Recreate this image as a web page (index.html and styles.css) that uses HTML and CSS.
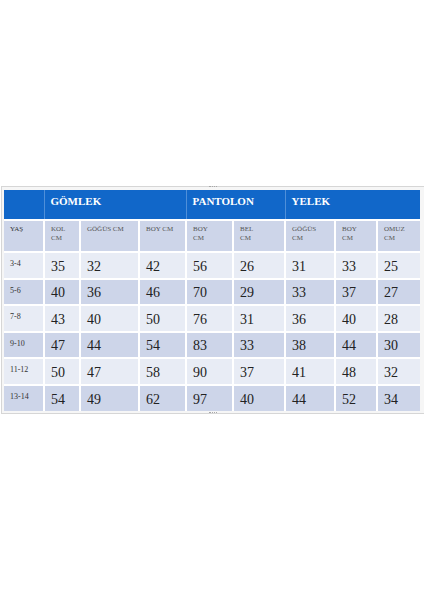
FILE: index.html
```html
<!DOCTYPE html>
<html lang="tr">
<head>
<meta charset="utf-8">
<title>Beden Tablosu</title>
<link rel="stylesheet" href="styles.css">
</head>
<body>
<div class="frame">
  <span class="grip grip-top"></span>
  <table class="size-table">
    <colgroup>
      <col class="c-age"><col class="c-kol"><col class="c-gogus"><col class="c-boy">
      <col class="c-pboy"><col class="c-bel"><col class="c-ygogus"><col class="c-yboy"><col class="c-omuz">
    </colgroup>
    <thead>
      <tr class="group-row">
        <th></th>
        <th colspan="3">GÖMLEK</th>
        <th colspan="2">PANTOLON</th>
        <th colspan="3">YELEK</th>
      </tr>
      <tr class="label-row">
        <th>YAŞ</th>
        <th>KOL<br>CM</th>
        <th>GÖĞÜS CM</th>
        <th>BOY CM</th>
        <th>BOY<br>CM</th>
        <th>BEL<br>CM</th>
        <th>GÖĞÜS<br>CM</th>
        <th>BOY<br>CM</th>
        <th>OMUZ<br>CM</th>
      </tr>
    </thead>
    <tbody>
      <tr class="light"><th>3-4</th><td>35</td><td>32</td><td>42</td><td>56</td><td>26</td><td>31</td><td>33</td><td>25</td></tr>
      <tr class="dark"><th>5-6</th><td>40</td><td>36</td><td>46</td><td>70</td><td>29</td><td>33</td><td>37</td><td>27</td></tr>
      <tr class="light"><th>7-8</th><td>43</td><td>40</td><td>50</td><td>76</td><td>31</td><td>36</td><td>40</td><td>28</td></tr>
      <tr class="dark"><th>9-10</th><td>47</td><td>44</td><td>54</td><td>83</td><td>33</td><td>38</td><td>44</td><td>30</td></tr>
      <tr class="light"><th>11-12</th><td>50</td><td>47</td><td>58</td><td>90</td><td>37</td><td>41</td><td>48</td><td>32</td></tr>
      <tr class="dark"><th>13-14</th><td>54</td><td>49</td><td>62</td><td>97</td><td>40</td><td>44</td><td>52</td><td>34</td></tr>
    </tbody>
  </table>
  <span class="grip grip-bottom"></span>
</div>
</body>
</html>
```

FILE: styles.css
```css
html, body {
  margin: 0;
  padding: 0;
  background: #ffffff;
}

body {
  font-family: "Liberation Serif", "DejaVu Serif", serif;
  color: #222;
}

.frame {
  position: relative;
  margin: 186px 1px 0 1px;
  width: 418px;
  border: 1px solid #d6d6d6;
  padding: 3px 2px 2px 2px;
  background: #f6f6f6;
}

.grip {
  position: absolute;
  left: 207px;
  width: 8px;
  height: 1px;
  border-top: 1px dotted #a8a8a8;
}

.grip-top { top: -1px; }
.grip-bottom { bottom: -1px; }

.size-table {
  width: 416px;
  table-layout: fixed;
  border-collapse: collapse;
  border-style: hidden;
}

.c-age { width: 40px; }
.c-kol { width: 36px; }
.c-gogus { width: 59px; }
.c-boy { width: 47px; }
.c-pboy { width: 47px; }
.c-bel { width: 52px; }
.c-ygogus { width: 50px; }
.c-yboy { width: 42px; }
.c-omuz { width: 43px; }

.size-table th,
.size-table td {
  border: 2px solid #ffffff;
  text-align: left;
  padding: 0 0 0 6px;
  box-sizing: border-box;
}

.group-row {
  height: 30px;
}

.group-row th {
  background: #1167c9;
  color: #ffffff;
  font-size: 11px;
  font-weight: bold;
  line-height: 13px;
  vertical-align: top;
  padding-top: 5px;
  border-top: none;
  border-left-color: #4f8fd9;
  border-right-color: #4f8fd9;
  border-left-width: 1px;
  border-right-width: 1px;
  border-bottom-width: 1px;
}

.label-row {
  height: 32px;
}

.label-row th {
  background: #cdd5e9;
  color: #555;
  font-size: 7px;
  font-weight: normal;
  line-height: 9px;
  vertical-align: top;
  padding-top: 4px;
}

.label-row th:first-child {
  color: #333;
}

.size-table tbody tr {
  height: 26.5px;
}

.light th, .light td { background: #e8ecf5; }
.dark th, .dark td { background: #cdd5e9; }

.size-table tbody th {
  font-size: 8px;
  font-weight: normal;
  color: #333;
  line-height: 10px;
  vertical-align: top;
  padding-top: 6px;
}

.size-table tbody td {
  font-size: 14px;
  line-height: 16px;
  color: #222;
  vertical-align: middle;
  padding-top: 3px;
}
```
